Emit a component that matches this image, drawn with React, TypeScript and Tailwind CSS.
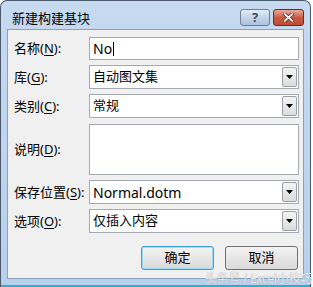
import React from "react";

const font = { fontFamily: '"Noto Sans", "Noto Sans CJK SC", sans-serif' };

function Label({ text, k }: { text: string; k: string }) {
  return (
    <div className="w-[81px] shrink-0 pl-[6px] text-[13px] leading-none text-black">
      {text}(<span className="underline underline-offset-2">{k}</span>):
    </div>
  );
}

function Combo({ value, latin }: { value: string; latin?: boolean }) {
  return (
    <div className="flex h-[24px] w-[210px] items-stretch border border-[#a4a9b2] bg-white">
      <div className={`flex flex-1 items-center pl-[3px] ${latin ? "text-[14px]" : "text-[13px]"} text-black`}>{value}</div>
      <div className="m-[1px] flex w-[15px] items-center justify-center rounded-[2px] border border-[#9a9ea6] bg-gradient-to-b from-[#f4f4f4] to-[#dcdcdc]">
        <svg width="7" height="4" viewBox="0 0 7 4"><path d="M0 0h7L3.5 4z" fill="#000" /></svg>
      </div>
    </div>
  );
}

export default function App() {
  return (
    <div className="h-[287px] w-[313px] bg-white" style={font}>
      <div className="relative flex h-[287px] w-[311px] flex-col rounded-t-[7px] border border-[#4a5a6c] border-b-0 bg-gradient-to-b from-[#c6daf0] to-[#b8d0ea]">
        <div className="flex h-[28px] shrink-0 items-start">
          <div className="mt-[8px] pl-[11px] text-[13px] text-black">新建构建基块</div>
          <div className="ml-auto mr-[6px] mt-[8px] flex gap-[3px]">
            <div className="flex h-[17px] w-[30px] items-center justify-center rounded-[3px] border border-[#6d7f95] bg-gradient-to-b from-[#e2ecf7] via-[#c3d5ea] to-[#aac2de] text-[13px] font-bold leading-none text-[#3a4a5e]">
              ?
            </div>
            <div className="flex h-[17px] w-[31px] items-center justify-center rounded-[3px] border border-[#6a2a22] bg-gradient-to-b from-[#e9a99c] via-[#c95a45] to-[#c04b32]">
              <svg width="11" height="9" viewBox="0 0 11 9">
                <path d="M1.5 1l8 7M9.5 1l-8 7" stroke="#4a1a12" strokeWidth="3.2" strokeLinecap="round" />
                <path d="M1.5 1l8 7M9.5 1l-8 7" stroke="#fff" strokeWidth="1.8" strokeLinecap="round" />
              </svg>
            </div>
          </div>
        </div>
        <div className="mx-[6px] flex h-[250px] flex-col border border-[#8aa1bd] bg-[#f0f0f0] pt-[7px]">
          <div className="flex flex-col gap-[5px]">
            <div className="flex items-center">
              <Label text="名称" k="N" />
              <div className="flex h-[23px] w-[210px] items-center border border-[#a4a9b2] bg-white pl-[3px] text-[14px] text-black">
                No<span className="ml-[1px] inline-block h-[14px] w-[1px] bg-black" />
              </div>
            </div>
            <div className="flex items-center">
              <Label text="库" k="G" />
              <Combo value="自动图文集" />
            </div>
            <div className="flex items-center">
              <Label text="类别" k="C" />
              <Combo value="常规" />
            </div>
            <div className="mt-[1px] flex items-center">
              <Label text="说明" k="D" />
              <div className="h-[51px] w-[210px] border border-[#a4a9b2] bg-white" />
            </div>
            <div className="flex items-center">
              <Label text="保存位置" k="S" />
              <Combo value="Normal.dotm" latin />
            </div>
            <div className="flex items-center">
              <Label text="选项" k="O" />
              <Combo value="仅插入内容" />
            </div>
          </div>
          <div className="mr-[5px] mt-[13px] flex justify-end gap-[11px]">
            <div className="flex h-[24px] w-[73px] items-center justify-center rounded-[3px] border border-[#3c9fd8] bg-gradient-to-b from-[#f3f3f3] to-[#dadada] text-[13px] text-black shadow-[inset_0_0_0_1px_#9fdcf6]">
              确定
            </div>
            <div className="flex h-[24px] w-[73px] items-center justify-center rounded-[3px] border border-[#707070] bg-gradient-to-b from-[#f3f3f3] to-[#dadada] text-[13px] text-black">
              取消
            </div>
          </div>
        </div>
        <div className="flex-1" />
        <div className="h-[2px] bg-[#1fb3d4]" />
        <div className="absolute left-[204px] top-[272px] whitespace-nowrap text-[12px] leading-none tracking-[-0.3px] text-white/80 [text-shadow:0_0_1px_#8a8a8a]">
          头条号 / Excel小技巧
        </div>
      </div>
    </div>
  );
}
